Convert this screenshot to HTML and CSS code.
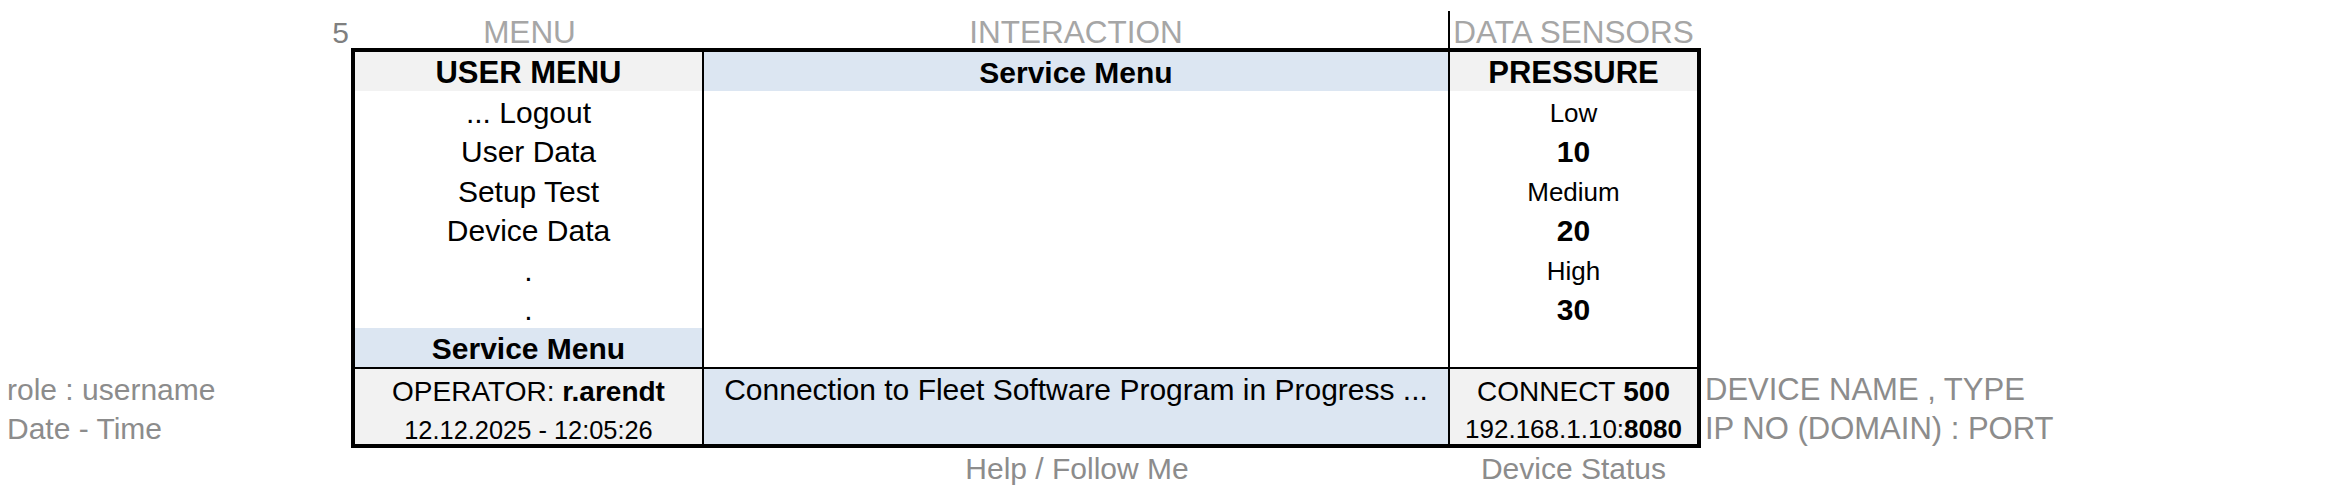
FILE: index.html
```html
<!DOCTYPE html>
<html lang="en">
<head>
<meta charset="utf-8">
<title>Service Menu</title>
<link rel="stylesheet" href="styles.css">
</head>
<body>
<div class="sheet">
  <div class="rownum">5</div>
  <div class="heads">
    <div class="head">MENU</div>
    <div class="head split">INTERACTION</div>
    <div class="head">DATA SENSORS</div>
  </div>

  <div class="side side-left">
    <div class="side-row">role : username</div>
    <div class="side-row second">Date - Time</div>
  </div>

  <div class="table">
    <div class="cell c1 gray hd"><b>USER MENU</b></div>
    <div class="cell c2 blue hd2"><b>Service Menu</b></div>
    <div class="cell c3 gray hd"><b>PRESSURE</b></div>

    <div class="cell c1">... Logout</div>
    <div class="cell c2 span7"></div>
    <div class="cell c3 sm">Low</div>

    <div class="cell c1">User Data</div>
    <div class="cell c3"><b>10</b></div>

    <div class="cell c1">Setup Test</div>
    <div class="cell c3 sm">Medium</div>

    <div class="cell c1">Device Data</div>
    <div class="cell c3"><b>20</b></div>

    <div class="cell c1">.</div>
    <div class="cell c3 sm">High</div>

    <div class="cell c1">.</div>
    <div class="cell c3"><b>30</b></div>

    <div class="cell c1 blue"><b>Service Menu</b></div>
    <div class="cell c3"></div>

    <div class="cell c1 gray sep low md">OPERATOR:&nbsp;<b>r.arendt</b></div>
    <div class="cell c2 blue sep span2">Connection to Fleet Software Program in Progress ...</div>
    <div class="cell c3 gray sep low md">CONNECT&nbsp;<b>500</b></div>

    <div class="cell c1 gray low xs">12.12.2025 - 12:05:26</div>
    <div class="cell c3 gray low sm">192.168.1.10:<b>8080</b></div>
  </div>

  <div class="side side-right">
    <div class="side-row">DEVICE NAME , TYPE</div>
    <div class="side-row second">IP NO (DOMAIN) : PORT</div>
  </div>

  <div class="foot">
    <div class="foot-cell"></div>
    <div class="foot-cell">Help / Follow Me</div>
    <div class="foot-cell">Device Status</div>
  </div>
</div>
</body>
</html>
```

FILE: styles.css
```css
* {
  box-sizing: border-box;
}

body {
  margin: 0;
  background: #ffffff;
  font-family: "Liberation Sans", Arial, sans-serif;
  color: #000000;
}

.sheet {
  display: grid;
  grid-template-columns: 351px 1350px 1fr;
  grid-template-rows: 48px 400px 40px;
}

.rownum {
  grid-column: 1;
  grid-row: 1;
  display: flex;
  justify-content: flex-end;
  align-items: flex-end;
  padding-right: 2px;
  font-size: 30px;
  line-height: 31px;
  color: #7f7f7f;
}

.heads {
  grid-column: 2;
  grid-row: 1;
  display: grid;
  grid-template-columns: 349px 746px 247px;
  align-items: end;
  padding: 0 4px;
}

.head {
  height: 37px;
  display: flex;
  justify-content: center;
  align-items: flex-end;
  font-size: 31.5px;
  line-height: 31px;
  color: #a6a6a6;
  white-space: nowrap;
}

.head.split {
  border-right: 2px solid #000000;
}

.side {
  grid-row: 2;
  display: flex;
  flex-direction: column;
  justify-content: flex-end;
  padding-bottom: 4px;
  font-size: 30px;
  color: #8c8c8c;
  white-space: nowrap;
}

.side-left {
  grid-column: 1;
  padding-left: 7px;
}

.side-right {
  grid-column: 3;
  padding-left: 4px;
  font-size: 31px;
}

.side-row {
  height: 37.5px;
  display: flex;
  align-items: flex-end;
  line-height: 34px;
}

.side-row.second {
  line-height: 30px;
}

.table {
  grid-column: 2;
  grid-row: 2;
  border: 4px solid #000000;
  display: grid;
  grid-template-columns: 349px 746px 247px;
  grid-template-rows: repeat(8, 39.375px) 39.5px 37.5px;
}

.cell {
  display: flex;
  justify-content: center;
  align-items: center;
  padding-top: 4px;
  font-size: 30px;
  line-height: 34px;
  white-space: nowrap;
}

.cell.hd {
  font-size: 31px;
  padding-top: 2px;
}

.cell.hd2 {
  padding-top: 2px;
}

.c1 {
  grid-column: 1;
  border-right: 2px solid #000000;
}

.c2 {
  grid-column: 2;
  border-right: 2px solid #000000;
}

.c3 {
  grid-column: 3;
}

.gray {
  background: #f2f2f2;
}

.blue {
  background: #dce6f2;
}

.sep {
  border-top: 2px solid #000000;
}

.low {
  align-items: flex-end;
  padding-top: 0;
}

.sm {
  font-size: 26px;
  line-height: 30px;
}

.xs {
  font-size: 25.4px;
  line-height: 28px;
}

.md {
  font-size: 28px;
  line-height: 30px;
}

.span7 {
  grid-row: span 7;
}

.span2 {
  grid-row: span 2;
  align-items: flex-start;
  padding-top: 4px;
}

.foot {
  grid-column: 2;
  grid-row: 3;
  display: grid;
  grid-template-columns: 349px 746px 247px;
  padding: 0 4px;
}

.foot-cell {
  display: flex;
  justify-content: center;
  align-items: center;
  padding-top: 1px;
  font-size: 30px;
  line-height: 34px;
  color: #8c8c8c;
  white-space: nowrap;
}
```
